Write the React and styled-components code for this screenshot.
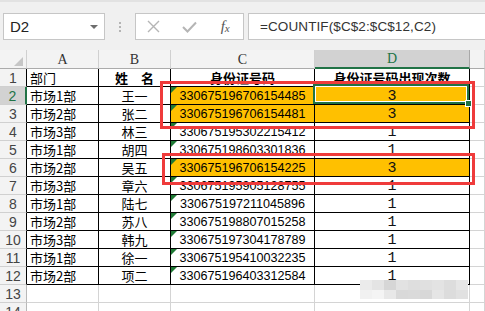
import React from 'react';
import styled, { createGlobalStyle, css } from 'styled-components';

const GlobalStyle = createGlobalStyle`
  html, body { margin: 0; padding: 0; background: #fff; overflow: hidden; }
  #root { width: 485px; height: 311px; }
`;

const Window = styled.div`
  position: relative;
  width: 485px;
  height: 311px;
  overflow: hidden;
  background: #fff;
  font-family: "Liberation Sans", Arial, sans-serif;
`;

const Toolbar = styled.div`
  height: 50px;
  box-sizing: border-box;
  background: #f0f0f0;
  border-top: 2px solid #e2e2e2;
  padding: 11px 0 0 3px;
  display: flex;
  align-items: flex-start;
`;

const Box = styled.div`
  height: 27px;
  box-sizing: border-box;
  background: #fff;
  border: 1px solid #c6c6c6;
  display: flex;
  align-items: center;
`;

const NameBox = styled(Box)`
  width: 102px;
  padding: 0 6px;
  justify-content: space-between;
  font-size: 15px;
  color: #222;
`;

const Caret = styled.span`
  width: 0;
  height: 0;
  border-left: 4px solid transparent;
  border-right: 4px solid transparent;
  border-top: 4px solid #6d6d6d;
`;

const Grip = styled.div`
  width: 30px;
  height: 27px;
  display: flex;
  flex-direction: column;
  align-items: center;
  justify-content: center;
  gap: 2px;

  span {
    width: 2px;
    height: 2px;
    background: #b4b4b4;
  }
`;

const ButtonBox = styled(Box)`
  width: 109px;
`;

const ToolButton = styled.span`
  width: 36px;
  height: 100%;
  display: flex;
  align-items: center;
  justify-content: center;
  color: #555;
  font-family: "Liberation Serif", serif;
  font-style: italic;
  font-size: 15px;

  sub {
    font-size: 11px;
    vertical-align: baseline;
    position: relative;
    top: 1px;
  }
`;

const FormulaBox = styled(Box)`
  flex: 1;
  margin-left: 4px;
  border-right: none;
  padding-left: 11px;
  font-size: 13.5px;
  color: #333;
  letter-spacing: 0.1px;
`;

const Sheet = styled.div`
  display: grid;
  grid-template-columns: 27px 72px 72px 144px 155px 1fr;
  grid-template-rows: 19px repeat(14, 18px);
`;

const lineColor = (l) => (l === 'black' ? '#000' : '#d4d4d4');

const Corner = styled.div`
  position: relative;
  background: #f3f3f3;
  border-right: 1px solid #d0d0d0;
  border-bottom: 1px solid #ababab;
  box-sizing: border-box;

  &::after {
    content: '';
    position: absolute;
    right: 3px;
    bottom: 2px;
    border-left: 9px solid transparent;
    border-bottom: 9px solid #c6c6c6;
  }
`;

const ColHead = styled.div`
  box-sizing: border-box;
  background: ${(p) => (p.$active ? '#d2d2d2' : '#f3f3f3')};
  color: ${(p) => (p.$active ? '#217346' : '#333')};
  border-right: 1px solid ${(p) => (p.$active ? '#a8a8a8' : '#d0d0d0')};
  border-bottom: ${(p) => (p.$active ? '2px solid #217346' : '1px solid #ababab')};
  font-family: "Liberation Serif", serif;
  font-size: 14px;
  display: flex;
  align-items: center;
  justify-content: center;
  padding-top: 1px;
`;

const RowHead = styled.div`
  box-sizing: border-box;
  background: ${(p) => (p.$active ? '#d2d2d2' : '#f3f3f3')};
  color: ${(p) => (p.$active ? '#217346' : '#444')};
  border-bottom: 1px solid #d0d0d0;
  border-right: ${(p) =>
    p.$active ? '2px solid #217346' : `1px solid ${p.$line === 'black' ? '#000' : '#b8b8b8'}`};
  font-size: 14px;
  display: flex;
  align-items: center;
  justify-content: center;
  padding-top: 1px;
`;

const Cell = styled.div`
  position: relative;
  box-sizing: border-box;
  border-right: 1px solid ${(p) => lineColor(p.$line)};
  border-bottom: 1px solid ${(p) => lineColor(p.$line)};
  background: ${(p) => (p.$fill ? '#ffc000' : '#fff')};
  color: #000;
  font-family: "Noto Sans CJK SC", "Liberation Sans", sans-serif;
  font-size: 13px;
  font-weight: ${(p) => (p.$bold ? 700 : 400)};
  display: flex;
  align-items: center;
  justify-content: ${(p) => (p.$align === 'left' ? 'flex-start' : 'center')};
  padding-left: ${(p) => (p.$align === 'left' ? '3px' : '0')};
  white-space: pre;
  overflow: visible;

  ${(p) =>
    p.$mono &&
    css`
      font-family: "Liberation Sans", Arial, sans-serif;
      font-size: 12.6px;
      padding-top: 1px;
    `}

  ${(p) =>
    p.$digit &&
    css`
      font-family: "Liberation Mono", "DejaVu Sans Mono", monospace;
      font-size: 15px;
      padding-top: 2px;
      color: #111;
    `}

  ${(p) =>
    p.$flag &&
    css`
      &::before {
        content: '';
        position: absolute;
        left: 0;
        top: 0;
        border-top: 6px solid #1f7a35;
        border-right: 6px solid transparent;
      }
    `}

  ${(p) =>
    p.$active &&
    css`
      z-index: 2;
      &::after {
        content: '';
        position: absolute;
        top: -3px;
        left: -2px;
        right: 0;
        bottom: 0;
        border: 2px solid #217346;
        box-shadow: inset 0 0 0 1px #fff;
        pointer-events: none;
      }
    `}
`;

const FillHandle = styled.span`
  position: absolute;
  right: -3px;
  bottom: -3px;
  width: 5px;
  height: 5px;
  background: #217346;
  border: 1px solid #fff;
  z-index: 3;
`;

const Mark = styled.div`
  position: absolute;
  box-sizing: border-box;
  border: 3px solid #ef3b3b;
  pointer-events: none;
  z-index: 4;
`;

const Mosaic = styled.div`
  position: absolute;
  left: 360px;
  top: 280px;
  width: 108px;
  display: grid;
  grid-template-columns: repeat(9, 12px);
  grid-template-rows: 10px 9px;
  z-index: 5;

  span { display: block; }
`;

const data = [
  ['部门', '姓\u3000名', '身份证号码', '身份证号码出现次数'],
  ['市场1部', '王一', '330675196706154485', '3', true],
  ['市场2部', '张二', '330675196706154481', '3', true],
  ['市场3部', '林三', '330675195302215412', '1'],
  ['市场1部', '胡四', '330675198603301836', '1'],
  ['市场2部', '吴五', '330675196706154225', '3', true],
  ['市场3部', '章六', '330675195905128755', '1'],
  ['市场1部', '陆七', '330675197211045896', '1'],
  ['市场2部', '苏八', '330675198807015258', '1'],
  ['市场3部', '韩九', '330675197304178789', '1'],
  ['市场1部', '徐一', '330675195410032235', '1'],
  ['市场2部', '项二', '330675196403312584', '1'],
];

const shades = [
  '#ebebeb', '#e4e4e4', '#d6d6d6', '#e2e2e2', '#dedede', '#e0e0e0', '#e3e3e3', '#dddddd', '#e6e6e6',
  '#f1f1f1', '#f4f4f4', '#e8e8e8', '#d9d9d9', '#dadada', '#d8d8d8', '#e5e5e5', '#dcdcdc', '#e1e1e1',
];

function Cross() {
  return (
    <svg width="13" height="13" viewBox="0 0 13 13">
      <path d="M1 1 L12 12 M12 1 L1 12" stroke="#b5b5b5" strokeWidth="1.4" fill="none" />
    </svg>
  );
}

function Check() {
  return (
    <svg width="15" height="12" viewBox="0 0 15 12">
      <path d="M1 6 L5.5 10.5 L14 1.5" stroke="#b5b5b5" strokeWidth="2" fill="none" />
    </svg>
  );
}

export default function App() {
  return (
    <Window>
      <GlobalStyle />
      <Toolbar>
        <NameBox>
          D2
          <Caret />
        </NameBox>
        <Grip>
          <span />
          <span />
          <span />
        </Grip>
        <ButtonBox>
          <ToolButton><Cross /></ToolButton>
          <ToolButton><Check /></ToolButton>
          <ToolButton>f<sub>x</sub></ToolButton>
        </ButtonBox>
        <FormulaBox>=COUNTIF($C$2:$C$12,C2)</FormulaBox>
      </Toolbar>

      <Sheet>
        <Corner />
        <ColHead>A</ColHead>
        <ColHead>B</ColHead>
        <ColHead>C</ColHead>
        <ColHead $active>D</ColHead>
        <ColHead />

        {data.map((row, i) => {
          const n = i + 1;
          const head = i === 0;
          return (
            <React.Fragment key={n}>
              <RowHead $line="black" $active={n === 2}>{n}</RowHead>
              <Cell $line="black" $align="left">{row[0]}</Cell>
              <Cell $line="black" $bold={head}>{row[1]}</Cell>
              <Cell $line="black" $bold={head} $mono={!head} $flag={!head} $fill={row[4]}>
                {row[2]}
              </Cell>
              <Cell $line="black" $bold={head} $digit={!head} $fill={row[4]} $active={n === 2}>
                {row[3]}
                {n === 2 && <FillHandle />}
              </Cell>
              <Cell $line="grid" />
            </React.Fragment>
          );
        })}

        {[13, 14].map((n) => (
          <React.Fragment key={n}>
            <RowHead>{n}</RowHead>
            <Cell $line="grid" />
            <Cell $line="grid" />
            <Cell $line="grid" />
            <Cell $line="grid" />
            <Cell $line="grid" />
          </React.Fragment>
        ))}
      </Sheet>

      <Mark style={{ left: 160, top: 81, width: 315, height: 48 }} />
      <Mark style={{ left: 162, top: 153, width: 313, height: 32 }} />

      <Mosaic>
        {shades.map((c, i) => (
          <span key={i} style={{ background: c }} />
        ))}
      </Mosaic>
    </Window>
  );
}
